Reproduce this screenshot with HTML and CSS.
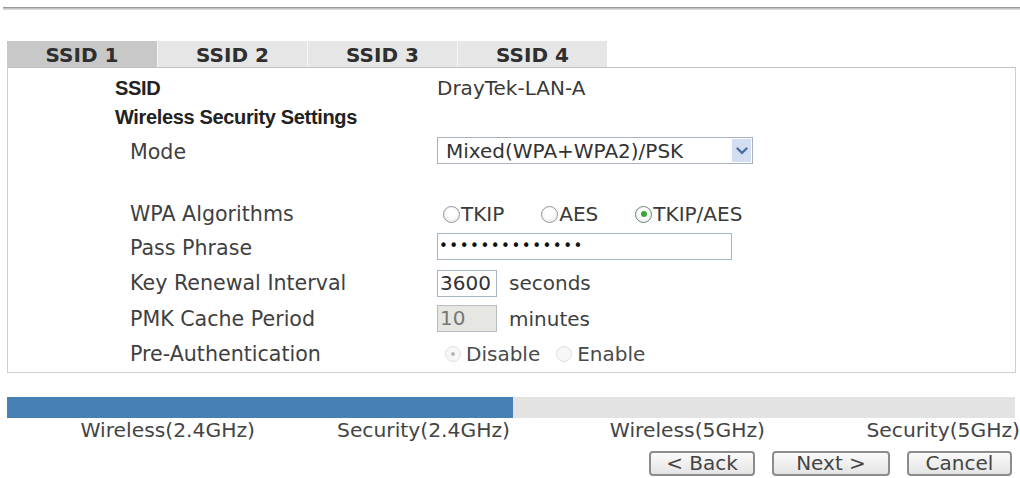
FILE: index.html
```html
<!DOCTYPE html>
<html>
<head>
<meta charset="utf-8">
<link rel="stylesheet" href="styles.css">
</head>
<body>
<div class="page">
  <div class="topline"></div>
  <div class="tabs">
    <div class="tab active">SSID 1</div>
    <div class="tab">SSID 2</div>
    <div class="tab">SSID 3</div>
    <div class="tab">SSID 4</div>
  </div>
  <div class="panel">
    <div class="row r-ssid">
      <div class="lbl head">SSID</div>
      <div class="val">DrayTek-LAN-A</div>
    </div>
    <div class="row r-wss">
      <div class="lbl head">Wireless Security Settings</div>
      <div class="val"></div>
    </div>
    <div class="row r-mode">
      <div class="lbl">Mode</div>
      <div class="val">
        <div class="select">
          <span class="sel-text">Mixed(WPA+WPA2)/PSK</span>
          <span class="sel-btn"><svg width="12" height="8" viewBox="0 0 12 8"><path d="M1.5 1.5 L6 6 L10.5 1.5" fill="none" stroke="#4b6ea8" stroke-width="2.4" stroke-linecap="round" stroke-linejoin="round"/></svg></span>
        </div>
      </div>
    </div>
    <div class="row r-blank"></div>
    <div class="row r-wpa">
      <div class="lbl">WPA Algorithms</div>
      <div class="val radios">
        <span class="opt"><span class="radio"></span>TKIP</span>
        <span class="opt"><span class="radio"></span>AES</span>
        <span class="opt"><span class="radio checked"></span>TKIP/AES</span>
      </div>
    </div>
    <div class="row r-pass">
      <div class="lbl">Pass Phrase</div>
      <div class="val"><div class="input pass">••••••••••••••</div></div>
    </div>
    <div class="row r-key">
      <div class="lbl">Key Renewal Interval</div>
      <div class="val"><div class="input short">3600</div><span class="unit">seconds</span></div>
    </div>
    <div class="row r-pmk">
      <div class="lbl">PMK Cache Period</div>
      <div class="val"><div class="input short disabled">10</div><span class="unit">minutes</span></div>
    </div>
    <div class="row r-pre">
      <div class="lbl">Pre-Authentication</div>
      <div class="val radios dis">
        <span class="opt"><span class="radio dchecked"></span>Disable</span>
        <span class="opt"><span class="radio dradio"></span>Enable</span>
      </div>
    </div>
  </div>

  <div class="progress"><div class="progress-fill" style="width:506px"></div></div>
  <div class="steps">
    <div class="step">Wireless(2.4GHz)</div>
    <div class="step">Security(2.4GHz)</div>
    <div class="step">Wireless(5GHz)</div>
    <div class="step">Security(5GHz)</div>
  </div>
  <div class="buttons">
    <button class="btn b-back">&lt; Back</button>
    <button class="btn b-next">Next &gt;</button>
    <button class="btn b-cancel">Cancel</button>
  </div>
</div>
</body>
</html>
```

FILE: styles.css
```css
html, body {
  margin: 0;
  padding: 0;
  background: #ffffff;
}
body {
  font-family: "DejaVu Sans", Verdana, sans-serif;
  font-size: 20px;
  color: #3a3a3a;
  width: 1020px;
  height: 478px;
  overflow: hidden;
}
.page {
  padding: 0 4px 0 7px;
}
.topline {
  margin: 7px -4px 0 -4px;
  height: 1px;
  border-top: 1px solid #9a9a9a;
  border-bottom: 1px solid #d8d8d8;
  background: #c4c4c4;
}
.tabs {
  display: flex;
  margin-top: 31px;
  height: 26px;
}
.tab {
  width: 150px;
  height: 26px;
  line-height: 28px;
  text-align: center;
  font-weight: bold;
  background: #e6e6e6;
  color: #2f2f2f;
  border-left: 1px solid #f6f6f6;
  box-sizing: border-box;
}
.tab.active {
  background: #c8c8c8;
  border-left: none;
}
.panel {
  border: 1px solid #cfcfcf;
  border-top: 1px solid #c2c2c2;
  height: 306px;
  box-sizing: border-box;
  padding-top: 6px;
}
.row {
  display: grid;
  grid-template-columns: 429px 1fr;
  align-items: center;
}
.r-ssid { height: 28px; }
.r-wss { height: 30px; }
.r-mode { height: 40px; }
.r-blank { height: 26px; }
.r-wpa { height: 32px; }
.r-pass { height: 35px; }
.r-key { height: 36px; }
.r-pmk { height: 35px; }
.r-pre { height: 35px; }
.lbl {
  padding-left: 122px;
  color: #3f3f3f;
  white-space: nowrap;
  font-size: 20.6px;
}
.lbl.head {
  padding-left: 107px;
  font-size: 20px;
  font-family: "Liberation Sans", Arial, sans-serif;
  font-weight: bold;
  letter-spacing: -0.35px;
  color: #222;
}
.val {
  display: flex;
  align-items: center;
  white-space: nowrap;
}
.select {
  width: 316px;
  height: 27px;
  border: 1px solid #a9b2bc;
  box-sizing: border-box;
  display: flex;
  align-items: center;
  justify-content: space-between;
  margin-top: -3px;
}
.sel-text {
  padding-left: 8px;
  color: #333;
}
.sel-btn {
  width: 19px;
  height: 23px;
  margin-right: 1px;
  background: #d3def0;
  display: flex;
  align-items: center;
  justify-content: center;
}
.radios .opt {
  display: inline-flex;
  align-items: center;
  margin-right: 31px;
}
.radio {
  width: 17px;
  height: 17px;
  border: 1px solid #8f969c;
  border-radius: 50%;
  box-sizing: border-box;
  margin: 0 1px 0 6px;
  background: radial-gradient(circle at 50% 40%, #ffffff 30%, #e6e6e6 100%);
  position: relative;
}
.radio.checked {
  border-color: #6d8a74;
}
.radio.checked::after {
  content: "";
  position: absolute;
  left: 4.5px;
  top: 4.5px;
  width: 6px;
  height: 6px;
  border-radius: 50%;
  background: #37a837;
}
.dis .opt {
  color: #4a4a4a;
  margin-right: 8px;
}
.dis .radio {
  width: 16px;
  height: 16px;
  margin: 0 5px 0 8px;
  border-color: #e0e0e0;
  background: #f7f7f7;
}
.radio.dchecked::after {
  content: "";
  position: absolute;
  left: 5px;
  top: 5px;
  width: 4px;
  height: 4px;
  border-radius: 50%;
  background: #b8b8b8;
}
.input {
  border: 1px solid #a7b4c2;
  box-sizing: border-box;
  height: 27px;
  line-height: 25px;
  padding-left: 2px;
  color: #333;
  background: #fff;
}
.input.pass {
  width: 295px;
  font-size: 15px;
  letter-spacing: 1.5px;
  color: #111;
  margin-top: -2px;
  padding-left: 1px;
}
.input.short {
  width: 60px;
}
.input.disabled {
  background: #e6e6e2;
  color: #777;
  border-color: #b6bcc2;
}
.unit {
  margin-left: 12px;
  color: #3f3f3f;
}
.progress {
  margin-top: 24px;
  height: 21px;
  width: 1008px;
  background: #e3e3e3;
}
.progress-fill {
  height: 100%;
  background: #4680b5;
}
.steps {
  display: grid;
  grid-template-columns: repeat(4, 255px);
  margin: 0 -4px 0 -7px;
  height: 24px;
  line-height: 24px;
  color: #444;
  font-size: 20.3px;
}
.step {
  text-align: right;
}
.buttons {
  display: flex;
  justify-content: flex-end;
  gap: 17px;
  margin-top: 9px;
  margin-right: 4px;
}
.btn {
  font-family: "DejaVu Sans", Verdana, sans-serif;
  font-size: 20px;
  color: #444;
  height: 25px;
  padding: 0;
  line-height: 21px;
  border: 2px solid #8c8c8c;
  border-radius: 4px;
  background: linear-gradient(#fbfbfb, #e4e4e4);
}
.b-back { width: 106px; }
.b-next { width: 118px; }
.b-cancel { width: 105px; }
```
